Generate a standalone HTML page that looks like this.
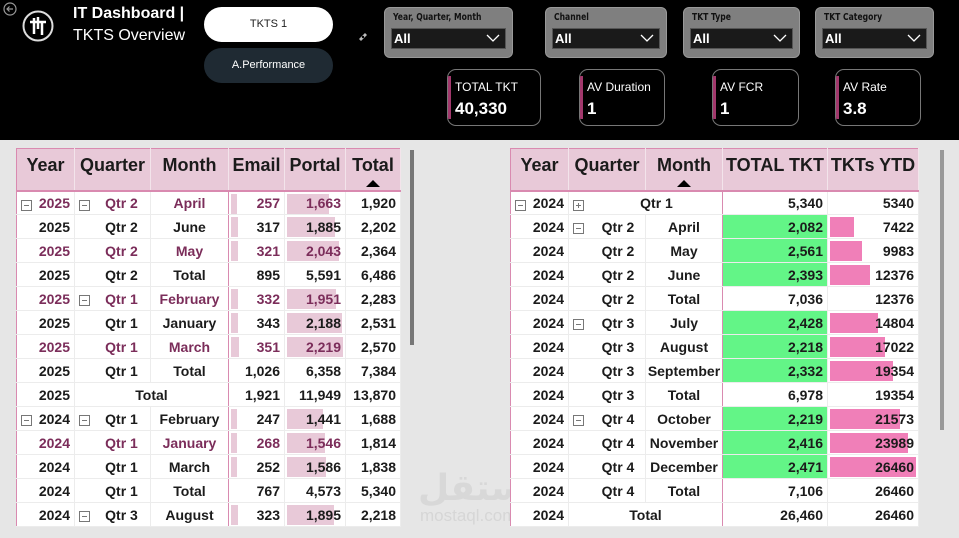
<!DOCTYPE html>
<html><head><meta charset="utf-8">
<style>
*{margin:0;padding:0;box-sizing:border-box}
body{width:959px;height:538px;background:#e6e6e6;font-family:"Liberation Sans",sans-serif;position:relative;overflow:hidden}
.hdr{position:absolute;left:0;top:0;width:959px;height:140px;background:#000}
.abs{position:absolute}
.pill{position:absolute;left:204px;width:129px;height:35px;border-radius:18px;text-align:center;font-size:11px;line-height:35px}
.flt{position:absolute;top:7px;height:51px;background:#7f7f7f;border-radius:6px;border:1px solid #999}
.flt .l{position:absolute;left:8px;top:4px;font-size:10px;font-weight:bold;color:#111;font-family:"DejaVu Sans Condensed","Liberation Sans",sans-serif;transform:scaleX(.85);transform-origin:left}
.flt .d{position:absolute;left:6px;right:6px;top:20px;height:21px;background:#1a1a1a;border:1px solid #555;color:#fff;font-size:13px;font-weight:bold;padding-left:2px;line-height:20px}
.flt .d svg{position:absolute;right:5px;top:5px}
.card{position:absolute;top:69px;height:57px;border:1px solid #777;border-radius:9px;background:#000;color:#fff;overflow:hidden}
.card::before{content:"";position:absolute;left:0;top:6px;bottom:6px;width:3px;background:#a2386c}
.card .t{position:absolute;left:7px;top:10px;font-size:12px}
.card .v{position:absolute;left:7px;top:29px;font-size:17px;font-weight:bold}
table{position:absolute;border-collapse:collapse;table-layout:fixed;background:#fff;font-weight:bold;font-size:14px;color:#1b1b1b}
th{background:#e8c9d8;height:42px;font-size:18px;border-right:1px solid #f3e4eb;border-bottom:2px solid #d98ab0;vertical-align:top;padding-top:6px;position:relative;white-space:nowrap}
td{height:24px;border-bottom:1px solid #ececec;border-right:1px solid #ececec;white-space:nowrap;overflow:hidden;position:relative}
td.c{text-align:center}
td.q{padding-left:18px}
td.q2{padding-left:22px}
td.r{text-align:right;padding-right:4px}
.p{color:#7b2d5a}
.pk{border-right:1px solid #d98ab0}
.ic{display:inline-block;width:11px;height:11px;border:1px solid #777;position:absolute;left:4px;top:8px}
.ic::after{content:"";position:absolute;left:2px;right:2px;top:4px;height:1px;background:#777}
.ic.plus::before{content:"";position:absolute;top:2px;bottom:2px;left:4px;width:1px;background:#777}
.tri{position:absolute;left:50%;bottom:3px;margin-left:-7px;width:0;height:0;border-left:7px solid transparent;border-right:7px solid transparent;border-bottom:7px solid #000}
.g{background:#63f587}
.sb{position:absolute;width:4px;background:#777}
</style></head><body>
<div class="hdr"></div>
<svg class="abs" style="left:3px;top:2px" width="14" height="14" viewBox="0 0 14 14"><circle cx="7" cy="7" r="6" fill="none" stroke="#999" stroke-width="1.2"/><path d="M10 7H4M6.5 4.5L4 7l2.5 2.5" fill="none" stroke="#999" stroke-width="1.2"/></svg>
<svg class="abs" style="left:21px;top:9px" width="34" height="34" viewBox="0 0 34 34"><circle cx="17" cy="17" r="14.5" fill="none" stroke="#ddd" stroke-width="2"/><path d="M9 13h16M13 9v16M21 13v13M17 8v12" stroke="#fff" stroke-width="2.5" fill="none"/></svg>
<div class="abs" style="left:73px;top:5px;color:#fff;font-size:16px;font-weight:bold">IT Dashboard |</div>
<div class="abs" style="left:73px;top:27px;color:#fff;font-size:16px">TKTS Overview</div>
<div class="pill" style="top:7px;background:#fff;color:#222">TKTS 1</div>
<div class="pill" style="top:48px;background:#1f2a33;color:#fff">A.Performance</div>
<svg class="abs" style="left:357px;top:31px" width="12" height="12" viewBox="0 0 12 12"><path d="M2 8L8 2l2 2-6 6z" fill="#bbb"/><circle cx="6" cy="6" r="1.2" fill="#000"/></svg>

<div class="flt" style="left:384px;width:129px"><div class="l">Year, Quarter, Month</div><div class="d">All<svg width="14" height="9"><path d="M1 1l6 6 6-6" stroke="#fff" fill="none" stroke-width="1.3"/></svg></div></div>
<div class="flt" style="left:545px;width:122px"><div class="l">Channel</div><div class="d">All<svg width="14" height="9"><path d="M1 1l6 6 6-6" stroke="#fff" fill="none" stroke-width="1.3"/></svg></div></div>
<div class="flt" style="left:683px;width:117px"><div class="l">TKT Type</div><div class="d">All<svg width="14" height="9"><path d="M1 1l6 6 6-6" stroke="#fff" fill="none" stroke-width="1.3"/></svg></div></div>
<div class="flt" style="left:815px;width:119px"><div class="l">TKT Category</div><div class="d">All<svg width="14" height="9"><path d="M1 1l6 6 6-6" stroke="#fff" fill="none" stroke-width="1.3"/></svg></div></div>

<div class="card" style="left:447px;width:94px"><div class="t">TOTAL TKT</div><div class="v">40,330</div></div>
<div class="card" style="left:579px;width:86px"><div class="t">AV Duration</div><div class="v">1</div></div>
<div class="card" style="left:712px;width:87px"><div class="t">AV FCR</div><div class="v">1</div></div>
<div class="card" style="left:835px;width:86px"><div class="t">AV Rate</div><div class="v">3.8</div></div>

<table style="left:16px;top:148px;width:384px;border:1px solid #d98ab0">
<colgroup><col style="width:58px"><col style="width:76px"><col style="width:78px"><col style="width:56px"><col style="width:61px"><col style="width:55px"></colgroup>
<tr><th>Year</th><th>Quarter</th><th>Month</th><th>Email</th><th>Portal</th><th>Total<span class="tri"></span></th></tr>
<tr class="p"><td class="r"><span class="ic"></span>2025</td><td class="c q"><span class="ic"></span>Qtr 2</td><td class="c pk">April</td><td class="r" style="background:linear-gradient(#e8c9d8,#e8c9d8) no-repeat 2px 2px/6px 20px">257</td><td class="r" style="background:linear-gradient(#e8c9d8,#e8c9d8) no-repeat 2px 2px/42px 20px">1,663</td><td class="r" style="color:#1b1b1b">1,920</td></tr>
<tr><td class="r">2025</td><td class="c q">Qtr 2</td><td class="c pk">June</td><td class="r" style="background:linear-gradient(#e8c9d8,#e8c9d8) no-repeat 2px 2px/7px 20px">317</td><td class="r" style="background:linear-gradient(#e8c9d8,#e8c9d8) no-repeat 2px 2px/48px 20px">1,885</td><td class="r">2,202</td></tr>
<tr class="p"><td class="r">2025</td><td class="c q">Qtr 2</td><td class="c pk">May</td><td class="r" style="background:linear-gradient(#e8c9d8,#e8c9d8) no-repeat 2px 2px/7px 20px">321</td><td class="r" style="background:linear-gradient(#e8c9d8,#e8c9d8) no-repeat 2px 2px/52px 20px">2,043</td><td class="r" style="color:#1b1b1b">2,364</td></tr>
<tr><td class="r">2025</td><td class="c q">Qtr 2</td><td class="c pk">Total</td><td class="r">895</td><td class="r">5,591</td><td class="r">6,486</td></tr>
<tr class="p"><td class="r">2025</td><td class="c q"><span class="ic"></span>Qtr 1</td><td class="c pk">February</td><td class="r" style="background:linear-gradient(#e8c9d8,#e8c9d8) no-repeat 2px 2px/7px 20px">332</td><td class="r" style="background:linear-gradient(#e8c9d8,#e8c9d8) no-repeat 2px 2px/49px 20px">1,951</td><td class="r" style="color:#1b1b1b">2,283</td></tr>
<tr><td class="r">2025</td><td class="c q">Qtr 1</td><td class="c pk">January</td><td class="r" style="background:linear-gradient(#e8c9d8,#e8c9d8) no-repeat 2px 2px/7px 20px">343</td><td class="r" style="background:linear-gradient(#e8c9d8,#e8c9d8) no-repeat 2px 2px/55px 20px">2,188</td><td class="r">2,531</td></tr>
<tr class="p"><td class="r">2025</td><td class="c q">Qtr 1</td><td class="c pk">March</td><td class="r" style="background:linear-gradient(#e8c9d8,#e8c9d8) no-repeat 2px 2px/8px 20px">351</td><td class="r" style="background:linear-gradient(#e8c9d8,#e8c9d8) no-repeat 2px 2px/56px 20px">2,219</td><td class="r" style="color:#1b1b1b">2,570</td></tr>
<tr><td class="r">2025</td><td class="c q">Qtr 1</td><td class="c pk">Total</td><td class="r">1,026</td><td class="r">6,358</td><td class="r">7,384</td></tr>
<tr><td class="r">2025</td><td class="c pk" colspan="2">Total</td><td class="r">1,921</td><td class="r">11,949</td><td class="r">13,870</td></tr>
<tr><td class="r"><span class="ic"></span>2024</td><td class="c q"><span class="ic"></span>Qtr 1</td><td class="c pk">February</td><td class="r" style="background:linear-gradient(#e8c9d8,#e8c9d8) no-repeat 2px 2px/6px 20px">247</td><td class="r" style="background:linear-gradient(#e8c9d8,#e8c9d8) no-repeat 2px 2px/36px 20px">1,441</td><td class="r">1,688</td></tr>
<tr class="p"><td class="r">2024</td><td class="c q">Qtr 1</td><td class="c pk">January</td><td class="r" style="background:linear-gradient(#e8c9d8,#e8c9d8) no-repeat 2px 2px/6px 20px">268</td><td class="r" style="background:linear-gradient(#e8c9d8,#e8c9d8) no-repeat 2px 2px/38px 20px">1,546</td><td class="r" style="color:#1b1b1b">1,814</td></tr>
<tr><td class="r">2024</td><td class="c q">Qtr 1</td><td class="c pk">March</td><td class="r" style="background:linear-gradient(#e8c9d8,#e8c9d8) no-repeat 2px 2px/6px 20px">252</td><td class="r" style="background:linear-gradient(#e8c9d8,#e8c9d8) no-repeat 2px 2px/39px 20px">1,586</td><td class="r">1,838</td></tr>
<tr><td class="r">2024</td><td class="c q">Qtr 1</td><td class="c pk">Total</td><td class="r">767</td><td class="r">4,573</td><td class="r">5,340</td></tr>
<tr><td class="r">2024</td><td class="c q"><span class="ic"></span>Qtr 3</td><td class="c pk">August</td><td class="r" style="background:linear-gradient(#e8c9d8,#e8c9d8) no-repeat 2px 2px/7px 20px">323</td><td class="r" style="background:linear-gradient(#e8c9d8,#e8c9d8) no-repeat 2px 2px/47px 20px">1,895</td><td class="r">2,218</td></tr>
</table>
<div class="sb" style="left:410px;top:150px;height:195px"></div>

<div class="abs" style="left:418px;top:468px;font-size:36px;font-weight:bold;color:#d8d8d8;font-family:'DejaVu Sans',sans-serif">مستقل</div>
<div class="abs" style="left:420px;top:506px;font-size:17px;color:#d6d6d6">mostaql.com</div>

<table style="left:510px;top:148px;width:408px;border:1px solid #d98ab0">
<colgroup><col style="width:58px"><col style="width:77px"><col style="width:77px"><col style="width:105px"><col style="width:91px"></colgroup>
<tr><th>Year</th><th>Quarter</th><th>Month<span class="tri"></span></th><th>TOTAL TKT</th><th>TKTs YTD</th></tr>
<tr><td class="r"><span class="ic"></span>2024</td><td class="c pk q2" colspan="2"><span class="ic plus"></span>Qtr 1</td><td class="r">5,340</td><td class="r">5340</td></tr>
<tr><td class="r">2024</td><td class="c q2"><span class="ic"></span>Qtr 2</td><td class="c pk">April</td><td class="r g">2,082</td><td class="r" style="background:linear-gradient(#f07fb8,#f07fb8) no-repeat 2px 2px/24px 20px">7422</td></tr>
<tr><td class="r">2024</td><td class="c q2">Qtr 2</td><td class="c pk">May</td><td class="r g">2,561</td><td class="r" style="background:linear-gradient(#f07fb8,#f07fb8) no-repeat 2px 2px/32px 20px">9983</td></tr>
<tr><td class="r">2024</td><td class="c q2">Qtr 2</td><td class="c pk">June</td><td class="r g">2,393</td><td class="r" style="background:linear-gradient(#f07fb8,#f07fb8) no-repeat 2px 2px/40px 20px">12376</td></tr>
<tr><td class="r">2024</td><td class="c q2">Qtr 2</td><td class="c pk">Total</td><td class="r">7,036</td><td class="r">12376</td></tr>
<tr><td class="r">2024</td><td class="c q2"><span class="ic"></span>Qtr 3</td><td class="c pk">July</td><td class="r g">2,428</td><td class="r" style="background:linear-gradient(#f07fb8,#f07fb8) no-repeat 2px 2px/48px 20px">14804</td></tr>
<tr><td class="r">2024</td><td class="c q2">Qtr 3</td><td class="c pk">August</td><td class="r g">2,218</td><td class="r" style="background:linear-gradient(#f07fb8,#f07fb8) no-repeat 2px 2px/55px 20px">17022</td></tr>
<tr><td class="r">2024</td><td class="c q2">Qtr 3</td><td class="c pk">September</td><td class="r g">2,332</td><td class="r" style="background:linear-gradient(#f07fb8,#f07fb8) no-repeat 2px 2px/63px 20px">19354</td></tr>
<tr><td class="r">2024</td><td class="c q2">Qtr 3</td><td class="c pk">Total</td><td class="r">6,978</td><td class="r">19354</td></tr>
<tr><td class="r">2024</td><td class="c q2"><span class="ic"></span>Qtr 4</td><td class="c pk">October</td><td class="r g">2,219</td><td class="r" style="background:linear-gradient(#f07fb8,#f07fb8) no-repeat 2px 2px/70px 20px">21573</td></tr>
<tr><td class="r">2024</td><td class="c q2">Qtr 4</td><td class="c pk">November</td><td class="r g">2,416</td><td class="r" style="background:linear-gradient(#f07fb8,#f07fb8) no-repeat 2px 2px/78px 20px">23989</td></tr>
<tr><td class="r">2024</td><td class="c q2">Qtr 4</td><td class="c pk">December</td><td class="r g">2,471</td><td class="r" style="background:linear-gradient(#f07fb8,#f07fb8) no-repeat 2px 2px/86px 20px">26460</td></tr>
<tr><td class="r">2024</td><td class="c q2">Qtr 4</td><td class="c pk">Total</td><td class="r">7,106</td><td class="r">26460</td></tr>
<tr><td class="r">2024</td><td class="c pk" colspan="2">Total</td><td class="r">26,460</td><td class="r">26460</td></tr>
</table>
<div class="sb" style="left:940px;top:150px;height:280px;background:#999"></div>
</body></html>
